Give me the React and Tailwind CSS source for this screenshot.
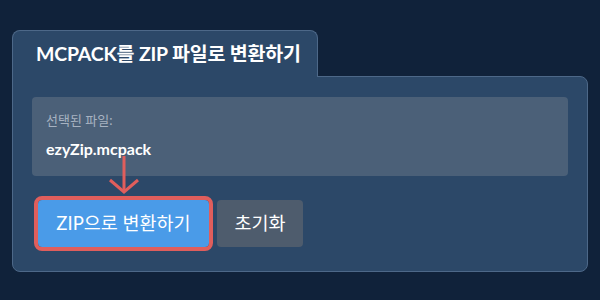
import React from 'react'

const App = () => {
  return (
    <div className="w-[600px] h-[300px] bg-[#10223a] pt-[30px] pl-3 font-['Lato','Noto_Sans_CJK_KR',sans-serif] overflow-hidden">
      <div className="w-[576px]">
        {/* tab */}
        <div className="relative z-10 -mb-px w-[306px] h-[47px] bg-[#2c4868] border border-b-0 border-[#4d6888] rounded-t-lg pl-[23px] pt-[13px]">
          <h1 className="text-[19.5px] font-bold text-white leading-none tracking-[-0.2px]">
            MCPACK를 ZIP 파일로 변환하기
          </h1>
        </div>

        {/* panel */}
        <div className="relative bg-[#2c4868] border border-[#4d6888] rounded-b-lg rounded-tr-lg px-[19px] pt-5 pb-6">
          <div className="bg-[#4b6078] rounded h-[79px] px-[14px] pt-[17px]">
            <p className="text-[13px] text-[#a7b2c1] leading-none">선택된 파일:</p>
            <p className="mt-[14px] text-[16px] font-bold text-white leading-none">ezyZip.mcpack</p>
          </div>

          <div className="flex gap-2 mt-6 pl-[6px]">
            <button className="w-[171px] h-[47px] bg-[#4a9be8] text-white text-[18.5px] rounded-sm outline-4 outline-[#e05e5c]">
              ZIP으로 변환하기
            </button>
            <button className="w-[86px] h-[47px] bg-[#4e5c6d] text-white text-[18.5px] rounded">
              초기화
            </button>
          </div>

          {/* arrow */}
          <svg className="absolute left-[95px] top-[79px]" width="32" height="38" viewBox="0 0 32 38">
            <path d="M16 0 V36" stroke="#e05e5c" strokeWidth="3" fill="none" />
            <path d="M2 24 L16 36 L30 24" stroke="#e05e5c" strokeWidth="3" fill="none" />
          </svg>
        </div>
      </div>
    </div>
  )
}

export default App
